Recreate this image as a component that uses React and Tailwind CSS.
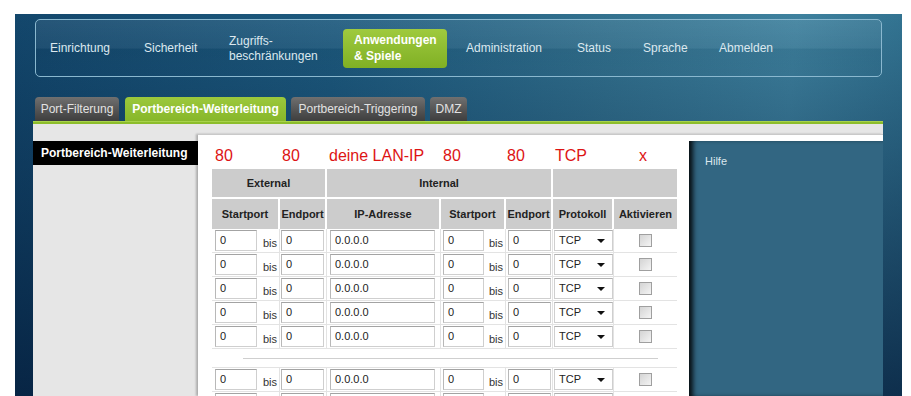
const navFont = { fontFamily: '"Liberation Sans", Arial, sans-serif' };

const rows = [0, 1, 2, 3, 4];

function TextBox({ w, value }) {
  return (
    <div
      className={`${w} h-[21px] bg-white border border-[#cfcfcf] border-t-[#a3a3a3] border-l-[#b8b8b8] pl-[4px] text-[11px] leading-[19px] text-[#222]`}
    >
      {value}
    </div>
  );
}

// cut = the row peeking out at the bottom edge, only its boxes show
function DataRow({ cut }) {
  return (
    <div className="grid grid-cols-[68px_47px_114px_65px_47px_61px_63px] h-[24px] border-b border-[#e3e3e3]">
      <div className="flex items-center pl-[3px] border-r border-[#e3e3e3]">
        <TextBox w="w-[42px]" value={cut ? "" : "0"} />
        <span className="ml-[6px] mt-[5px] text-[11px] text-[#333]">{cut ? "" : "bis"}</span>
      </div>
      <div className="flex items-center pl-[1px] border-r border-[#e3e3e3]">
        <TextBox w="w-[43px]" value={cut ? "" : "0"} />
      </div>
      <div className="flex items-center pl-[3px] border-r border-[#e3e3e3]">
        <TextBox w="w-[105px]" value={cut ? "" : "0.0.0.0"} />
      </div>
      <div className="flex items-center pl-[2px] border-r border-[#e3e3e3]">
        <TextBox w="w-[41px]" value={cut ? "" : "0"} />
        <span className="ml-[5px] mt-[5px] text-[11px] text-[#333]">{cut ? "" : "bis"}</span>
      </div>
      <div className="flex items-center pl-[2px] border-r border-[#e3e3e3]">
        <TextBox w="w-[43px]" value={cut ? "" : "0"} />
      </div>
      <div className="flex items-center pl-[1px] border-r border-[#e3e3e3]">
        <div className="w-[59px] h-[21px] bg-white border border-[#cfcfcf] border-t-[#b0b0b0] flex items-center justify-between pl-[4px] pr-[7px] text-[11px] text-[#222]">
          <span>{cut ? "" : "TCP"}</span>
          <span className="w-0 h-0 border-l-[4px] border-r-[4px] border-t-[4px] border-l-transparent border-r-transparent border-t-[#111] mt-[1px]" />
        </div>
      </div>
      <div className="flex items-center justify-center">
        <div className="w-[13px] h-[13px] border border-[#9f9f9f] bg-gradient-to-br from-[#d4d4d4] to-[#f4f4f4]" />
      </div>
    </div>
  );
}

export default function App() {
  return (
    <div className="w-[911px] h-[396px] overflow-hidden bg-white pt-[14px] pl-[15px]" style={navFont}>
      <div className="w-[887px] h-[382px] overflow-hidden pt-[5px] pl-[18px] bg-[linear-gradient(180deg,rgba(10,40,70,0)_0%,rgba(3,25,55,0.75)_100%),linear-gradient(95deg,#13476c_0%,#1d5a7e_35%,#33728f_65%,#3e819e_85%,#2f6f8d_100%)]">
        {/* top navigation */}
        <div className="ml-[2px] w-[847px] h-[58px] rounded-[5px] border border-[#8ab8cf] bg-[linear-gradient(180deg,rgba(255,255,255,0.08)_0%,rgba(255,255,255,0.05)_50%,rgba(0,0,0,0.03)_52%,rgba(0,0,0,0)_100%)] flex items-center pl-[14px] text-[12px] text-[#dce8ef]">
          <div className="w-[94px]">Einrichtung</div>
          <div className="w-[85px]">Sicherheit</div>
          <div className="w-[114px] leading-[15px] mt-[2px]">
            Zugriffs-
            <br />
            beschränkungen
          </div>
          <div className="w-[104px] h-[39px] rounded-[4px] bg-gradient-to-b from-[#9fca3e] to-[#80b024] pl-[11px] pt-[3px] font-bold text-white leading-[16px]">
            Anwendungen
            <br />& Spiele
          </div>
          <div className="w-[111px] ml-[19px]">Administration</div>
          <div className="w-[66px]">Status</div>
          <div className="w-[76px]">Sprache</div>
          <div>Abmelden</div>
        </div>

        {/* sub tabs */}
        <div className="mt-[20px] ml-[2px] flex items-end h-[24px] text-[12px]">
          <div className="w-[84px] h-[24px] rounded-t-[4px] bg-gradient-to-b from-[#707070] to-[#3e3e3e] text-[#e2e2e2] flex items-center justify-center">
            Port-Filterung
          </div>
          <div className="ml-[6px] w-[161px] h-[24px] rounded-t-[4px] bg-gradient-to-b from-[#9cc83c] to-[#87b72a] text-white font-bold flex items-center justify-center">
            Portbereich-Weiterleitung
          </div>
          <div className="ml-[5px] w-[134px] h-[24px] rounded-t-[4px] bg-gradient-to-b from-[#707070] to-[#3e3e3e] text-[#e2e2e2] flex items-center justify-center">
            Portbereich-Triggering
          </div>
          <div className="ml-[5px] w-[37px] h-[24px] rounded-t-[4px] bg-gradient-to-b from-[#707070] to-[#3e3e3e] text-[#e2e2e2] flex items-center justify-center">
            DMZ
          </div>
        </div>
        <div className="w-[850px] h-[3px] bg-[#8cbd2b] border-t border-[#a8d24a]" />

        {/* content */}
        <div className="w-[850px] h-[272px] overflow-hidden bg-[#e6e6e6] flex">
          <div className="w-[165px] pt-[17px]">
            <div className="h-[24px] bg-black text-white font-bold text-[12px] pl-[8px] pt-[3px]">
              Portbereich-Weiterleitung
            </div>
          </div>
          <div className="flex-1 mt-[10px] bg-white border-t border-[#c9c9c9] shadow-[-2px_0_2px_rgba(0,0,0,0.25)] flex">
            <div className="w-[491px] pl-[14px]">
              <div className="h-[34px] flex items-end pb-[1px] text-[16px] text-[#dd1414] pl-[3px]">
                <span className="w-[67px]">80</span>
                <span className="w-[47px]">80</span>
                <span className="w-[114px]">deine LAN-IP</span>
                <span className="w-[64px]">80</span>
                <span className="w-[48px]">80</span>
                <span className="w-[84px]">TCP</span>
                <span>x</span>
              </div>
              <div className="w-[465px]">
                <div className="grid grid-cols-[115px_226px_124px] h-[30px] text-[11px] font-bold text-[#222]">
                  <div className="bg-[#cccccc] border-r-2 border-b-2 border-white flex items-center justify-center">External</div>
                  <div className="bg-[#cccccc] border-r-2 border-b-2 border-white flex items-center justify-center">Internal</div>
                  <div className="bg-[#cccccc] border-b-2 border-white" />
                </div>
                <div className="grid grid-cols-[68px_47px_114px_65px_47px_61px_63px] h-[30px] text-[11px] font-bold text-[#222]">
                  <div className="bg-[#cccccc] border-r-2 border-white flex items-center justify-center">Startport</div>
                  <div className="bg-[#cccccc] border-r-2 border-white flex items-center justify-center">Endport</div>
                  <div className="bg-[#cccccc] border-r-2 border-white flex items-center justify-center">IP-Adresse</div>
                  <div className="bg-[#cccccc] border-r-2 border-white flex items-center justify-center">Startport</div>
                  <div className="bg-[#cccccc] border-r-2 border-white flex items-center justify-center">Endport</div>
                  <div className="bg-[#cccccc] border-r-2 border-white flex items-center justify-center">Protokoll</div>
                  <div className="bg-[#cccccc] flex items-center justify-center">Aktivieren</div>
                </div>
                {rows.map((r) => (
                  <DataRow key={r} />
                ))}
                <div className="h-[19px] border-b border-[#e3e3e3] flex items-center pl-[31px] pr-[19px]">
                  <div className="w-full h-px bg-[#cfcfcf]" />
                </div>
                <DataRow />
                <DataRow cut />
              </div>
            </div>
            <div className="flex-1 mt-[6px] bg-[#326682] shadow-[inset_6px_0_5px_-2px_rgba(0,0,0,0.85)] pl-[16px] pt-[12px] text-[11px] text-[#dbe7ee]">
              Hilfe
            </div>
          </div>
        </div>
      </div>
    </div>
  );
}
